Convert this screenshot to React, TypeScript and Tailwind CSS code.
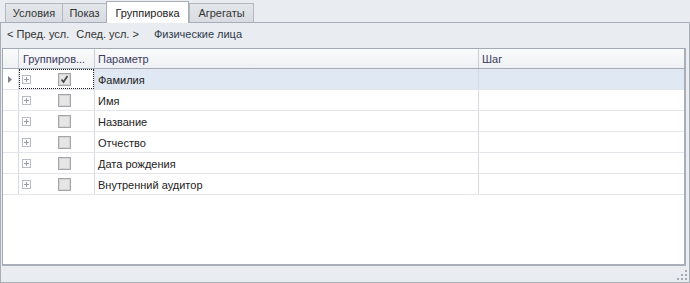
import React from 'react';

const rows = [
  { name: 'Фамилия', checked: true },
  { name: 'Имя', checked: false },
  { name: 'Название', checked: false },
  { name: 'Отчество', checked: false },
  { name: 'Дата рождения', checked: false },
  { name: 'Внутренний аудитор', checked: false },
];

const tabs = [
  { label: 'Условия', w: 'w-[58px]' },
  { label: 'Показ', w: 'w-[45px]' },
  { label: 'Группировка', w: 'w-[83px]', active: true },
  { label: 'Агрегаты', w: 'w-[65px]' },
];

function ExpandBox() {
  return (
    <svg width="9" height="9" viewBox="0 0 9 9" className="block">
      <rect x="0.5" y="0.5" width="8" height="8" fill="#fbfbfb" stroke="#b9bcc0" />
      <path d="M2 4.5h5M4.5 2v5" stroke="#9a9ea4" strokeWidth="1" />
    </svg>
  );
}

function CheckBox({ checked }: { checked: boolean }) {
  return (
    <svg width="13" height="13" viewBox="0 0 13 13" className="block">
      <rect x="0.5" y="0.5" width="12" height="12" fill="#f4f4f4" stroke="#a4a6aa" />
      <rect x="1.5" y="1.5" width="10" height="10" fill="#e6e6e6" stroke="#d2d3d5" strokeWidth="1" />
      {checked && <path d="M3.5 6.5l2 2.5 4-6" fill="none" stroke="#4b4b4b" strokeWidth="1.8" />}
    </svg>
  );
}

export default function App() {
  return (
    <div className="w-[690px] h-[283px] bg-[#e9ecf0] flex flex-col overflow-hidden relative text-[11px] text-[#2b2b2b]" style={{ fontFamily: '"Liberation Sans", Arial, sans-serif' }}>
      <div className="h-[22px] flex items-end pl-[5px] shrink-0">
        {tabs.map(t => (
          <div
            key={t.label}
            className={
              t.active
                ? `${t.w} h-[22px] -mb-px bg-white border border-b-0 border-[#a9aeb6] flex items-center justify-center pt-[2px] text-[#222] relative z-10`
                : `${t.w} h-[19px] bg-gradient-to-b from-[#e3e6eb] to-[#d8dce2] border border-b-0 border-[#b3b8c0] -mr-px flex items-center justify-center pt-px text-[#333]`
            }
          >
            {t.label}
          </div>
        ))}
      </div>
      <div className="flex-1 flex flex-col border border-[#a8aeb7] bg-[#e9ecf0]">
        <div className="h-[25px] flex items-start pt-[3px] pl-[6px] text-[#333] shrink-0">
          <span>&lt; Пред. усл.</span>
          <span className="ml-[7px]">След. усл. &gt;</span>
          <span className="ml-[15px] text-[#2e3a4c]">Физические лица</span>
        </div>
        <div className="flex-1 ml-px mr-[3px] mb-[16px] border-t border-l border-[#a3a9b2] border-r-2 border-b-2 border-r-[#a9afb8] border-b-[#a9afb8] bg-white flex flex-col">
          <div className="h-[20px] flex bg-gradient-to-b from-[#fafbfc] to-[#eef0f3] border-b border-[#a5acb5] text-[#3a3a62] shrink-0">
            <div className="w-[16px] border-r border-[#c9ced5]" />
            <div className="w-[76px] border-r border-[#c9ced5] pl-[4px] pt-px flex items-center">Группиров...</div>
            <div className="w-[384px] border-r border-[#c9ced5] pl-[3px] pt-px flex items-center">Параметр</div>
            <div className="flex-1 pl-[3px] pt-px flex items-center">Шаг</div>
          </div>
          {rows.map((r, i) => (
            <div key={r.name} className={`h-[21px] flex border-b border-[#e2e6eb] ${i === 0 ? 'bg-[#dfe8f3]' : ''}`}>
              <div className="w-[16px] border-r border-[#d6dbe1] bg-white flex items-center pl-[5px]">
                {i === 0 && (
                  <svg width="4" height="7" viewBox="0 0 4 7" className="block">
                    <path d="M0 0L4 3.5L0 7Z" fill="#7d838c" />
                  </svg>
                )}
              </div>
              <div className={`w-[76px] border-r border-[#d6dbe1] flex items-center relative ${i === 0 ? 'bg-white' : ''}`}>
                {i === 0 && <div className="absolute inset-0 border border-dotted border-[#222]" />}
                <div className="ml-[3px]"><ExpandBox /></div>
                <div className="ml-[27px]"><CheckBox checked={r.checked} /></div>
              </div>
              <div className="w-[384px] border-r border-[#d6dbe1] pl-[3px] flex items-center pt-[2px] text-[#222]">{r.name}</div>
              <div className="flex-1" />
            </div>
          ))}
        </div>
      </div>
      <div className="absolute right-[3px] bottom-[3px] grid grid-cols-3 gap-[2px]">
        <span className="w-[2px] h-[2px]" />
        <span className="w-[2px] h-[2px]" />
        <span className="w-[2px] h-[2px] bg-[#a4aab3]" />
        <span className="w-[2px] h-[2px]" />
        <span className="w-[2px] h-[2px] bg-[#a4aab3]" />
        <span className="w-[2px] h-[2px] bg-[#a4aab3]" />
        <span className="w-[2px] h-[2px] bg-[#a4aab3]" />
        <span className="w-[2px] h-[2px] bg-[#a4aab3]" />
        <span className="w-[2px] h-[2px] bg-[#a4aab3]" />
      </div>
    </div>
  );
}
